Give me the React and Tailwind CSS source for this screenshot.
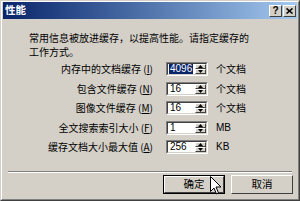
import React from "react";

const cjk = { fontFamily: '"Noto Sans CJK SC", "Noto Sans", sans-serif' };
const latin = { fontFamily: '"Liberation Sans", "DejaVu Sans", sans-serif' };

const rows = [
  { label: "内存中的文档缓存", key: "I", value: "4096", unit: "个文档", selected: true },
  { label: "包含文件缓存", key: "N", value: "16", unit: "个文档" },
  { label: "图像文件缓存", key: "M", value: "16", unit: "个文档" },
  { label: "全文搜索索引大小", key: "F", value: "1", unit: "MB", latinUnit: true },
  { label: "缓存文档大小最大值", key: "A", value: "256", unit: "KB", latinUnit: true },
];

const Arrow = ({ up }) => (
  <svg width="5" height="3" viewBox="0 0 5 3" className="block">
    {up ? <path d="M2.5 0 L5 3 L0 3 Z" fill="#000" /> : <path d="M0 0 L5 0 L2.5 3 Z" fill="#000" />}
  </svg>
);

const SpinBox = ({ value, selected }) => (
  <div className="flex h-[14px] w-[42px] border-t border-l border-[#808080] border-b border-r border-b-white border-r-white">
    <div className="flex flex-1 border-t border-l border-[#404040] border-b border-r border-b-[#d4d0c8] border-r-[#d4d0c8] bg-white">
      <div className="flex-1 flex items-center pl-[1px] text-[10px] leading-none" style={latin}>
        <span className={selected ? "bg-[#0a246a] text-white px-[1px]" : "text-black px-[1px]"}>{value}</span>
      </div>
      <div className="flex flex-col w-[11px]">
        <div className="flex-1 flex items-center justify-center bg-[#d4d0c8] border-t border-l border-white border-b border-r border-b-[#404040] border-r-[#404040]">
          <Arrow up />
        </div>
        <div className="flex-1 flex items-center justify-center bg-[#d4d0c8] border-t border-l border-white border-b border-r border-b-[#404040] border-r-[#404040]">
          <Arrow />
        </div>
      </div>
    </div>
  </div>
);

const Btn = ({ children, isDefault }) => (
  <div className={isDefault ? "border border-black w-[62px] h-[19px]" : "w-[62px] h-[19px]"}>
    <div className="w-full h-full bg-[#d4d0c8] border-t border-l border-white border-b border-r border-b-[#404040] border-r-[#404040] flex items-center justify-center text-[10.5px] leading-none text-black" style={cjk}>
      {children}
    </div>
  </div>
);

const CapBtn = ({ children }) => (
  <div className="w-[13px] h-[12px] bg-[#d4d0c8] border-t border-l border-white border-b border-r border-b-[#404040] border-r-[#404040] flex items-center justify-center text-[10px] font-bold leading-none text-black" style={latin}>
    {children}
  </div>
);

export default function App() {
  return (
    <div className="w-[300px] h-[201px] bg-[#d4d0c8] relative overflow-hidden">
      <div className="w-full h-full border-t border-l border-[#d4d0c8] border-b border-r border-b-[#404040] border-r-[#404040]">
        <div className="w-full h-full border-t border-l border-white border-b border-r border-b-[#808080] border-r-[#808080] flex flex-col">
          <div className="h-[17px] mx-[1px] flex items-center justify-between bg-gradient-to-r from-[#0a246a] to-[#a6caf0]">
            <span className="pl-[2px] text-white font-bold text-[10.5px] leading-none" style={cjk}>性能</span>
            <div className="flex items-center pr-[1px]">
              <CapBtn>?</CapBtn>
              <div className="ml-[1px]">
                <CapBtn>
                  <svg width="7" height="6" viewBox="0 0 7 6"><path d="M0.5 0.5 L6.5 5.5 M6.5 0.5 L0.5 5.5" stroke="#000" strokeWidth="1.6" /></svg>
                </CapBtn>
              </div>
            </div>
          </div>

          <div className="pl-[27px] pt-[12px] text-[10px] leading-[14px] text-black" style={cjk}>
            <div>常用信息被放进缓存，以提高性能。请指定缓存的</div>
            <div>工作方式。</div>
          </div>

          <div className="flex flex-col gap-[5.5px] mt-[3px]">
            {rows.map((r) => (
              <div key={r.key} className="flex items-center h-[14px]">
                <div className="w-[151px] text-right text-[10px] leading-none text-black whitespace-nowrap" style={cjk}>
                  {r.label} (<span className="underline">{r.key}</span>)
                </div>
                <div className="ml-[13px]">
                  <SpinBox value={r.value} selected={r.selected} />
                </div>
                <div className="ml-[8px] text-[10px] leading-none text-black" style={r.latinUnit ? latin : cjk}>
                  {r.unit}
                </div>
              </div>
            ))}
          </div>

          <div className="mx-[6px] mt-[17px] border-t border-[#808080] border-b border-b-white" />

          <div className="flex justify-end gap-[6px] pr-[5px] mt-[2px]">
            <Btn isDefault>确定</Btn>
            <Btn>取消</Btn>
          </div>
        </div>
      </div>

      <svg className="absolute left-[210px] top-[176px]" width="12" height="19" viewBox="0 0 12 19">
        <path d="M0.5 0.5 L0.5 15.5 L4 12 L6.5 18 L8.5 17 L6 11 L11 11 Z" fill="#fff" stroke="#000" strokeWidth="1" />
      </svg>
    </div>
  );
}
